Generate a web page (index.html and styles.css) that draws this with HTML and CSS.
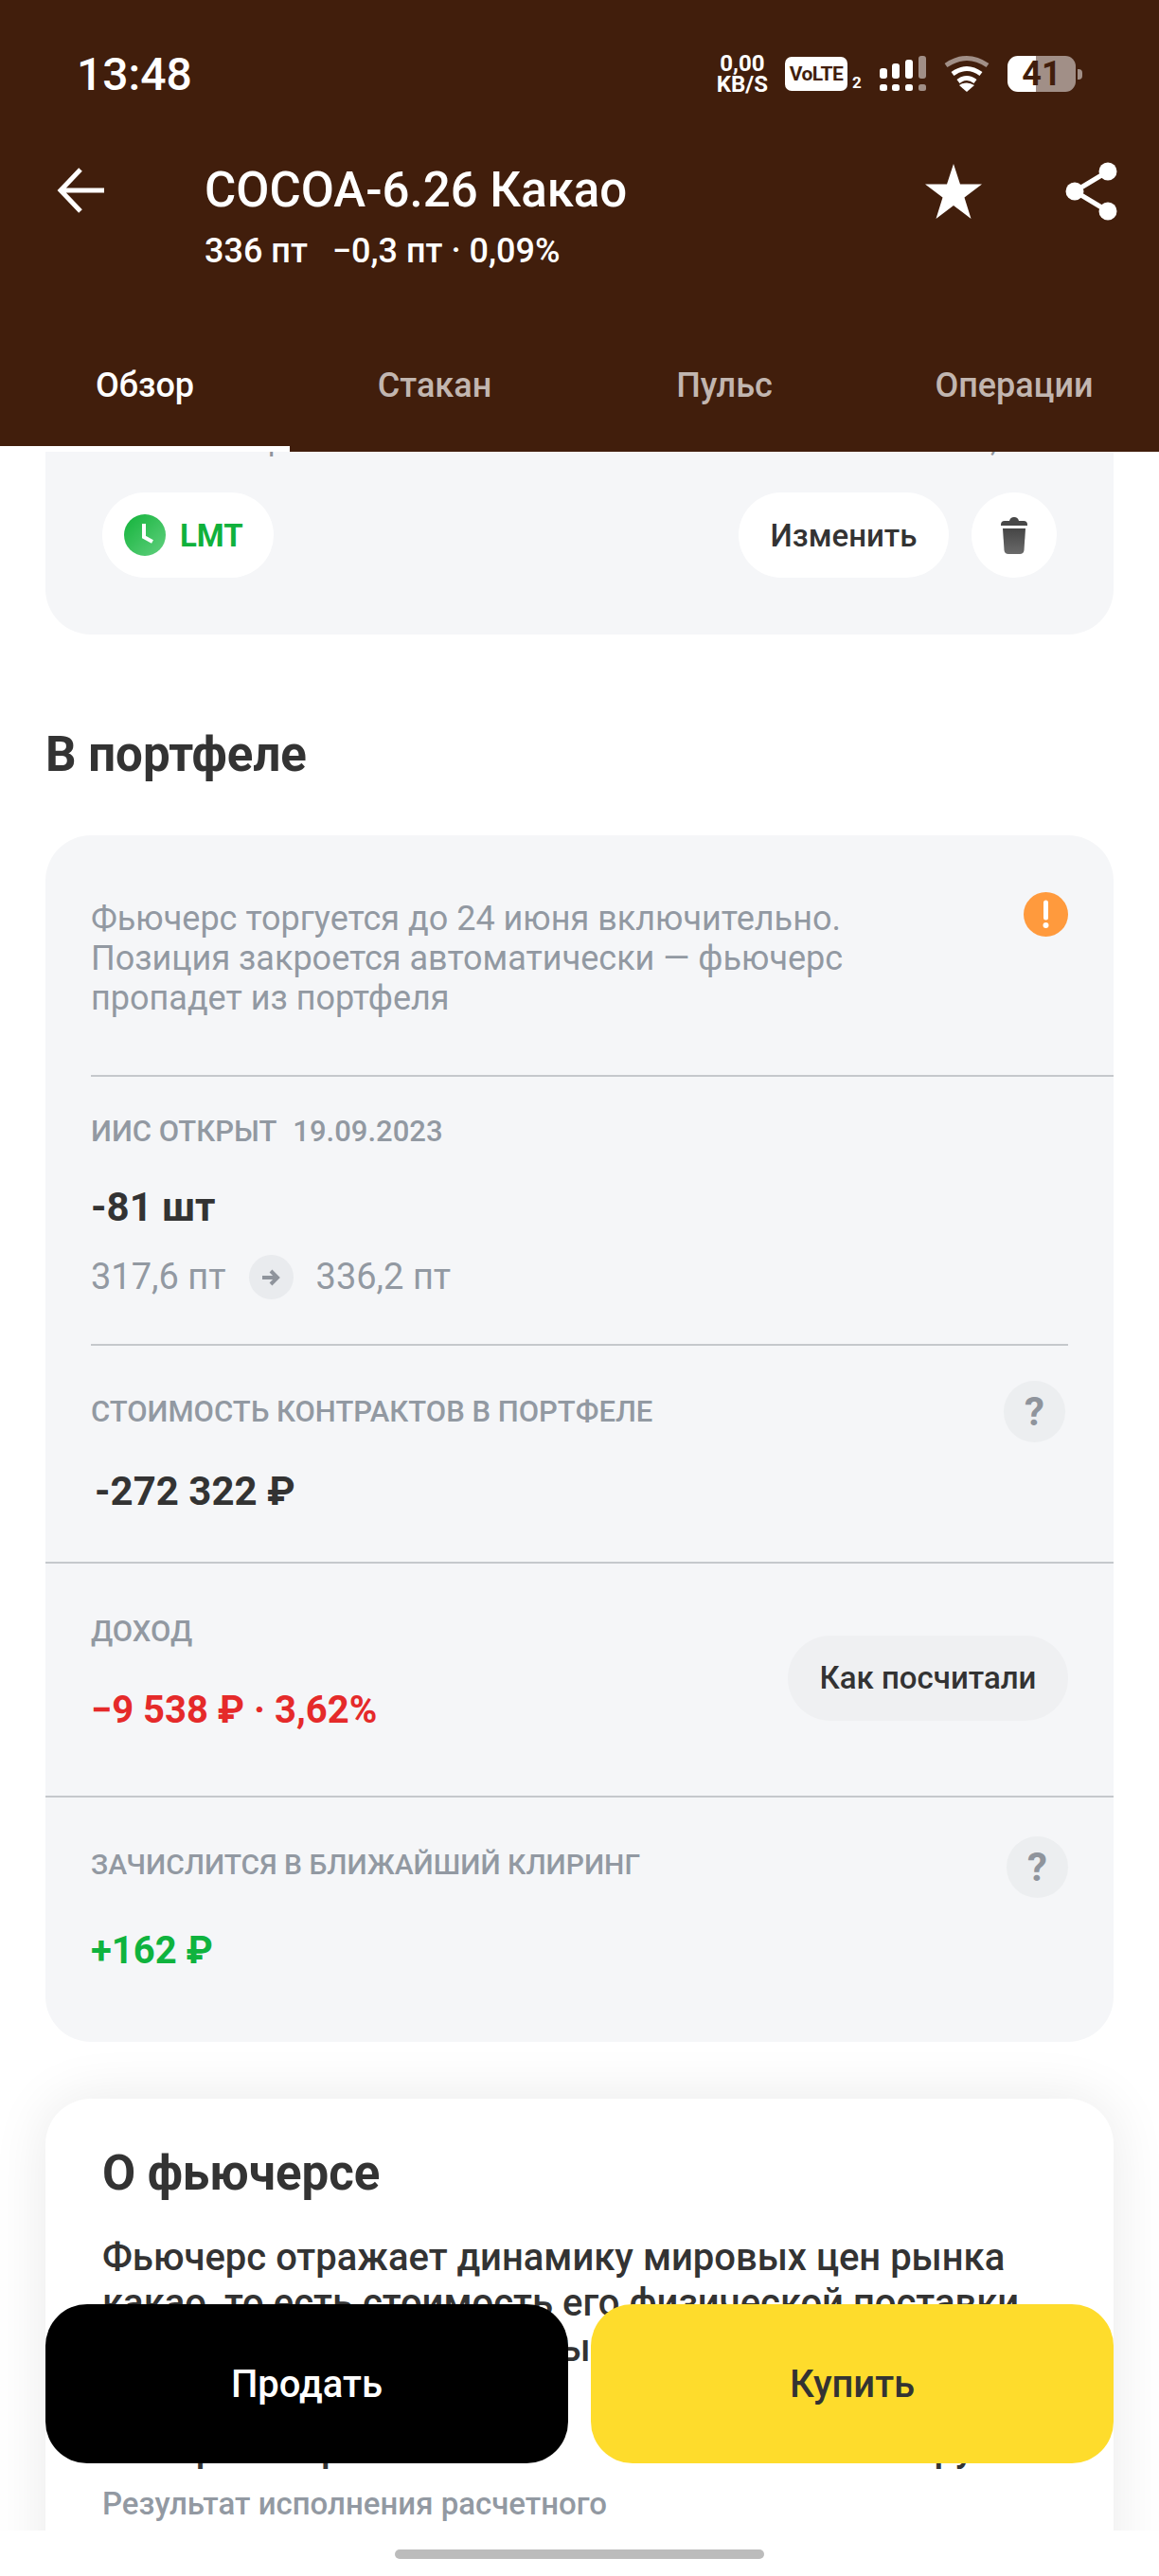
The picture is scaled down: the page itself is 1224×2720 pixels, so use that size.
FILE: index.html
```html
<!doctype html>
<html lang="ru">
	<head>
		<meta charset="utf-8">
		<title>COCOA-6.26 Какао</title>
		<meta name="viewport" content="width=device-width, initial-scale=1">
		<link rel="stylesheet" href="styles.css">
	</head>
	<body>
		<div class="screen">
			<header class="top">
				<div class="status">
					<span class="clock">13:48</span>
					<div class="speed"><span>0,00</span><span>KB/S</span></div>
					<span class="volte">VoLTE</span>
					<span class="sim">2</span>
					<svg class="signal" width="50" height="40" viewBox="0 0 50 40">
						<g fill="#fff">
							<rect x="0" y="14" width="8" height="11" rx="3"/>
							<rect x="13" y="9" width="8" height="16" rx="3"/>
							<rect x="27" y="5" width="8" height="20" rx="3"/>
							<rect x="0" y="31" width="8" height="7" rx="2.5"/>
							<rect x="13" y="31" width="8" height="7" rx="2.5"/>
							<rect x="27" y="31" width="8" height="7" rx="2.5"/>
						</g>
						<g fill="#a18f87">
							<rect x="41" y="1" width="8" height="24" rx="3"/>
							<rect x="41" y="31" width="8" height="7" rx="2.5"/>
						</g>
					</svg>
					<svg class="wifi" width="48" height="40" viewBox="0 0 48 40">
						<g fill="none" stroke-width="5">
							<path d="M2 11Q24 -4 46 11" stroke="#a18f87"/>
							<path d="M9 20Q24 9 39 20" stroke="#fff"/>
							<path d="M15 28Q24 21 33 28" stroke="#fff"/>
						</g>
						<path d="M16 32Q24 27 32 32L24 39Z" fill="#fff"/>
					</svg>
					<div class="battery"><span>41</span></div>
					<i class="battery-tip"></i>
				</div>

				<div class="toolbar">
					<svg class="back" width="52" height="50" viewBox="0 0 52 50">
						<path d="M50 25H6M25 3L4 25L25 47" fill="none" stroke="#fff" stroke-width="5"/>
					</svg>
					<div class="ticker">
						<h1>COCOA-6.26 Какао</h1>
						<p><span class="price">336 пт</span>−0,3 пт · 0,09%</p>
					</div>
					<svg class="star" width="60" height="58" viewBox="0 0 60 58">
						<path d="M30 0L37 21.500H60L41.500 35.500L48.500 58L30 44L11.500 58L18.500 35.500L0 21.500H23Z" fill="#fff"/>
					</svg>
					<svg class="share" width="56" height="62" viewBox="0 0 56 62">
						<g fill="#fff">
							<circle cx="10" cy="31" r="9.500"/>
							<circle cx="45" cy="10" r="9.500"/>
							<circle cx="45" cy="52" r="9.500"/>
						</g>
						<path d="M45 10L10 31L45 52" fill="none" stroke="#fff" stroke-width="5"/>
					</svg>
				</div>

				<nav class="tabs">
					<a class="tab active">Обзор</a>
					<a class="tab">Стакан</a>
					<a class="tab">Пульс</a>
					<a class="tab">Операции</a>
				</nav>
			</header>

			<main class="scroll">
				<section class="card order">
					<div class="order-peek"><span>р</span><span>,</span></div>
					<div class="order-row">
						<span class="pill lmt">
							<svg width="44" height="44" viewBox="0 0 44 44">
								<defs>
									<linearGradient id="clockfill" x1="0" y1="0" x2="1" y2="1">
										<stop offset="0" stop-color="#12b33a"/>
										<stop offset="1" stop-color="#62d07f"/>
									</linearGradient>
								</defs>
								<circle cx="22" cy="22" r="22" fill="url(#clockfill)"/>
								<path d="M21 10V24L30 29" fill="none" stroke="#fff" stroke-width="4"/>
							</svg>
							LMT
						</span>
						<span class="pill edit">Изменить</span>
						<span class="pill trash">
							<svg width="28" height="40" viewBox="0 0 28 40">
								<defs>
									<linearGradient id="trashfill" x1="0" y1="0" x2="0" y2="1">
										<stop offset="0" stop-color="#454545"/>
										<stop offset="1" stop-color="#6a6a6a"/>
									</linearGradient>
								</defs>
								<path d="M0 9Q0 5 4 5H9Q10 1 14 1Q18 1 19 5H24Q28 5 28 9V10H0Z" fill="#484848"/>
								<path d="M2 13H26L24.500 36Q24 40 20 40H8Q4 40 3.500 36Z" fill="url(#trashfill)"/>
							</svg>
						</span>
					</div>
				</section>

				<h2 class="section-title">В портфеле</h2>

				<section class="card portfolio">
					<div class="notice">
						<p>Фьючерс торгуется до 24 июня включительно.<br>Позиция закроется автоматически — фьючерс<br>пропадет из портфеля</p>
						<svg width="47" height="47" viewBox="0 0 47 47">
							<circle cx="23.500" cy="23.500" r="23.500" fill="#ff9a3d"/>
							<path d="M23.500 11V27" stroke="#fff" stroke-width="5" stroke-linecap="round"/>
							<circle cx="23.500" cy="35" r="3" fill="#fff"/>
						</svg>
					</div>

					<div class="block position">
						<div class="label">ИИС ОТКРЫТ <span class="date">19.09.2023</span></div>
						<div class="value count">-81 шт</div>
						<div class="route">
							<span>317,6 пт</span>
							<span class="route-arrow">
								<svg width="22" height="20" viewBox="0 0 22 20">
									<path d="M2 10H18M11 3L18 10L11 17" fill="none" stroke="#8f949c" stroke-width="4"/>
								</svg>
							</span>
							<span>336,2 пт</span>
						</div>
					</div>

					<div class="block contracts">
						<div class="label-row">
							<div class="label">СТОИМОСТЬ КОНТРАКТОВ В ПОРТФЕЛЕ</div>
							<span class="hint">?</span>
						</div>
						<div class="value total">-272 322 ₽</div>
					</div>

					<div class="block income">
						<div>
							<div class="label">ДОХОД</div>
							<div class="value loss">−9 538 ₽ · 3,62%</div>
						</div>
						<span class="how">Как посчитали</span>
					</div>

					<div class="block clearing">
						<div class="label-row">
							<div class="label">ЗАЧИСЛИТСЯ В БЛИЖАЙШИЙ КЛИРИНГ</div>
							<span class="hint">?</span>
						</div>
						<div class="value gain">+162 ₽</div>
					</div>
				</section>

				<section class="card about">
					<h2>О фьючерсе</h2>
					<p class="about-text">Фьючерс отражает динамику мировых цен рынка<br>какао, то есть стоимость его физической поставки<br>Оценка по пунктам, и цены</p>
					<p class="about-text second"><span>Если рынок растёт</span><span>тоже в рублях</span></p>
					<p class="about-note">Результат исполнения расчетного<br>фьючерса</p>
				</section>

				<div class="actions">
					<button class="sell">Продать</button>
					<button class="buy">Купить</button>
				</div>
			</main>

			<footer class="navbar"><i></i></footer>
		</div>
	</body>
</html>
```

FILE: styles.css
```css
* {
	box-sizing: border-box;
}

html, body {
	margin: 0;
	background: #fff;
}

body {
	font-family: Roboto, "Noto Sans", sans-serif;
	color: #333;
}

.screen {
	width: 1224px;
	height: 2720px;
	display: flex;
	flex-direction: column;
	overflow: hidden;
}

/* brown header */
.top {
	flex: none;
	height: 477px;
	background: #411e0c;
	color: #fff;
	display: flex;
	flex-direction: column;
	position: relative;
	z-index: 2;
}

.status {
	height: 156px;
	padding: 0 81px 0 81px;
	display: flex;
	align-items: center;
}

.clock {
	font-size: 48px;
	font-weight: 500;
	margin-right: auto;
}

.speed {
	display: flex;
	flex-direction: column;
	align-items: center;
	font-size: 24px;
	line-height: 22px;
	font-weight: 700;
	margin-right: -1px;
}

.volte {
	width: 66px;
	height: 36px;
	margin-left: 19px;
	border-radius: 7px;
	background: #fff;
	color: #411e0c;
	font-size: 21px;
	line-height: 36px;
	font-weight: 700;
	text-align: center;
	letter-spacing: -0.5px;
}

.sim {
	font-size: 17px;
	font-weight: 700;
	margin: 18px 0 0 5px;
	width: 9px;
}

.signal {
	margin-left: 20px;
}

.wifi {
	margin-left: 18px;
}

.battery {
	width: 72px;
	height: 38px;
	margin-left: 19px;
	border-radius: 11px;
	background: linear-gradient(90deg, #fff 30px, #a18f87 30px);
	color: #411e0c;
	font-size: 36px;
	line-height: 38px;
	font-weight: 700;
	text-align: center;
}

.battery-tip {
	width: 5px;
	height: 11px;
	margin-left: 2px;
	border-radius: 0 4px 4px 0;
	background: #a18f87;
}

.toolbar {
	padding: 15px 43px 0 60px;
	display: flex;
	align-items: flex-start;
}

.back {
	margin-top: 5px;
	margin-right: 104px;
}

.ticker {
	flex: 1;
}

.ticker h1 {
	margin: 0;
	font-size: 51px;
	line-height: 60px;
	font-weight: 500;
}

.ticker p {
	margin: 12px 0 0;
	font-size: 36px;
	line-height: 44px;
	font-weight: 500;
}

.price {
	margin-right: 26px;
}

.star {
	margin-top: 2px;
}

.share {
	margin-left: 88px;
}

.tabs {
	margin-top: auto;
	display: grid;
	grid-template-columns: repeat(4, 1fr);
}

.tab {
	height: 92px;
	text-align: center;
	font-size: 36px;
	line-height: 44px;
	font-weight: 500;
	color: #c2b6b0;
}

.tab.active {
	color: #fff;
	box-shadow: inset 0 -6px 0 #fff;
}

/* scrolled page under the header */
.scroll {
	flex: 1;
	min-height: 0;
	padding: 0 48px;
	overflow: hidden;
	position: relative;
}

.card {
	border-radius: 48px;
	background: #f5f6f8;
}

.order {
	height: 193px;
	padding: 0 60px;
	border-radius: 0 0 48px 48px;
}

.order-peek {
	height: 6px;
	overflow: hidden;
	display: flex;
	font-size: 32px;
	line-height: 0;
	color: #8f949c;
}

.order-peek span {
	position: relative;
	top: -12px;
	margin-left: 175px;
}

.order-peek span + span {
	margin-left: 745px;
}

.order-row {
	margin-top: 37px;
	display: flex;
	align-items: center;
	gap: 24px;
}

.pill {
	height: 90px;
	border-radius: 45px;
	background: #fff;
	display: flex;
	align-items: center;
	font-weight: 500;
}

.lmt {
	width: 181px;
	padding-left: 23px;
	gap: 15px;
	font-size: 33px;
	font-weight: 700;
	color: #10b13c;
	margin-right: auto;
}

.edit {
	width: 222px;
	justify-content: center;
	font-size: 33px;
}

.trash {
	width: 90px;
	justify-content: center;
}

.section-title {
	margin: 99px 0 57px;
	font-size: 51px;
	line-height: 56px;
	font-weight: 700;
}

/* portfolio card */
.portfolio {
	padding-bottom: 72px;
}

.notice {
	margin-left: 48px;
	padding: 67px 48px 60px 0;
	border-bottom: 2px solid #c5c8cc;
	display: flex;
	justify-content: space-between;
	align-items: flex-start;
}

.notice p {
	margin: 0;
	font-size: 36px;
	line-height: 42px;
	color: #9299a2;
}

.notice svg {
	margin-top: -7px;
}

.block {
	padding: 0 48px;
}

.label {
	font-size: 31px;
	line-height: 36px;
	font-weight: 500;
	color: #9299a2;
}

.date {
	margin-left: 10px;
}

.value {
	font-size: 42px;
	line-height: 48px;
	font-weight: 700;
}

.position {
	padding-top: 40px;
	padding-bottom: 0;
}

.count {
	margin-top: 38px;
}

.route {
	margin-top: 26px;
	display: flex;
	align-items: center;
	gap: 24px;
	font-size: 38px;
	line-height: 47px;
	color: #9299a2;
}

.route-arrow {
	width: 47px;
	height: 47px;
	border-radius: 50%;
	background: #e9ebee;
	display: flex;
	align-items: center;
	justify-content: center;
}

.position::after {
	content: "";
	display: block;
	height: 2px;
	margin-top: 47px;
	background: #c5c8cc;
}

.contracts {
	padding-top: 37px;
	padding-bottom: 50px;
	border-bottom: 2px solid #c5c8cc;
}

.label-row {
	display: flex;
	justify-content: space-between;
	align-items: center;
}

.hint {
	width: 65px;
	height: 65px;
	border-radius: 50%;
	background: #eceef0;
	color: #8f949c;
	font-size: 42px;
	line-height: 65px;
	font-weight: 700;
	text-align: center;
}

.contracts .hint {
	margin-right: 3px;
}

.total {
	margin: 28px 0 0 4px;
}

.income {
	padding-top: 54px;
	padding-bottom: 66px;
	border-bottom: 2px solid #c5c8cc;
	display: flex;
	justify-content: space-between;
	align-items: center;
}

.loss {
	margin-top: 41px;
	font-size: 40px;
	color: #e52a2a;
}

.how {
	width: 296px;
	height: 90px;
	margin-top: 8px;
	border-radius: 45px;
	background: #eff0f2;
	font-size: 33px;
	line-height: 90px;
	font-weight: 500;
	text-align: center;
}

.clearing {
	padding-top: 41px;
}

.clearing .label {
	margin-top: -6px;
	font-size: 30px;
}

.gain {
	margin-top: 32px;
	font-size: 40px;
	color: #0fb33e;
}

/* about card, runs below the fold */
.about {
	margin-top: 60px;
	height: 600px;
	padding: 51px 60px 0;
	background: #fff;
	box-shadow: 0 0 60px rgba(0,0,0,0.09);
}

.about h2 {
	margin: 0 0 37px;
	font-size: 51px;
	line-height: 56px;
	font-weight: 700;
}

.about-text {
	margin: 0;
	font-size: 40px;
	line-height: 48px;
	font-weight: 500;
	white-space: nowrap;
}

.about-text.second {
	margin-top: 58px;
	display: flex;
	justify-content: space-between;
}

.about-note {
	margin: 12px 0 0;
	font-size: 33px;
	line-height: 44px;
	font-weight: 500;
	color: #9299a2;
}

/* buy and sell float over the content */
.actions {
	position: absolute;
	left: 48px;
	right: 48px;
	bottom: 71px;
	display: flex;
	gap: 24px;
}

.actions button {
	flex: 1;
	height: 168px;
	border: 0;
	border-radius: 44px;
	font-family: inherit;
	font-size: 40px;
	font-weight: 500;
}

.sell {
	background: #000;
	color: #fff;
}

.buy {
	background: #fedc2c;
	color: #333;
}

.navbar {
	flex: none;
	height: 48px;
	background: #fff;
	padding-top: 20px;
	position: relative;
}

.navbar i {
	display: block;
	width: 390px;
	height: 10px;
	margin: 0 auto;
	border-radius: 5px;
	background: #bcbcbc;
}
```
